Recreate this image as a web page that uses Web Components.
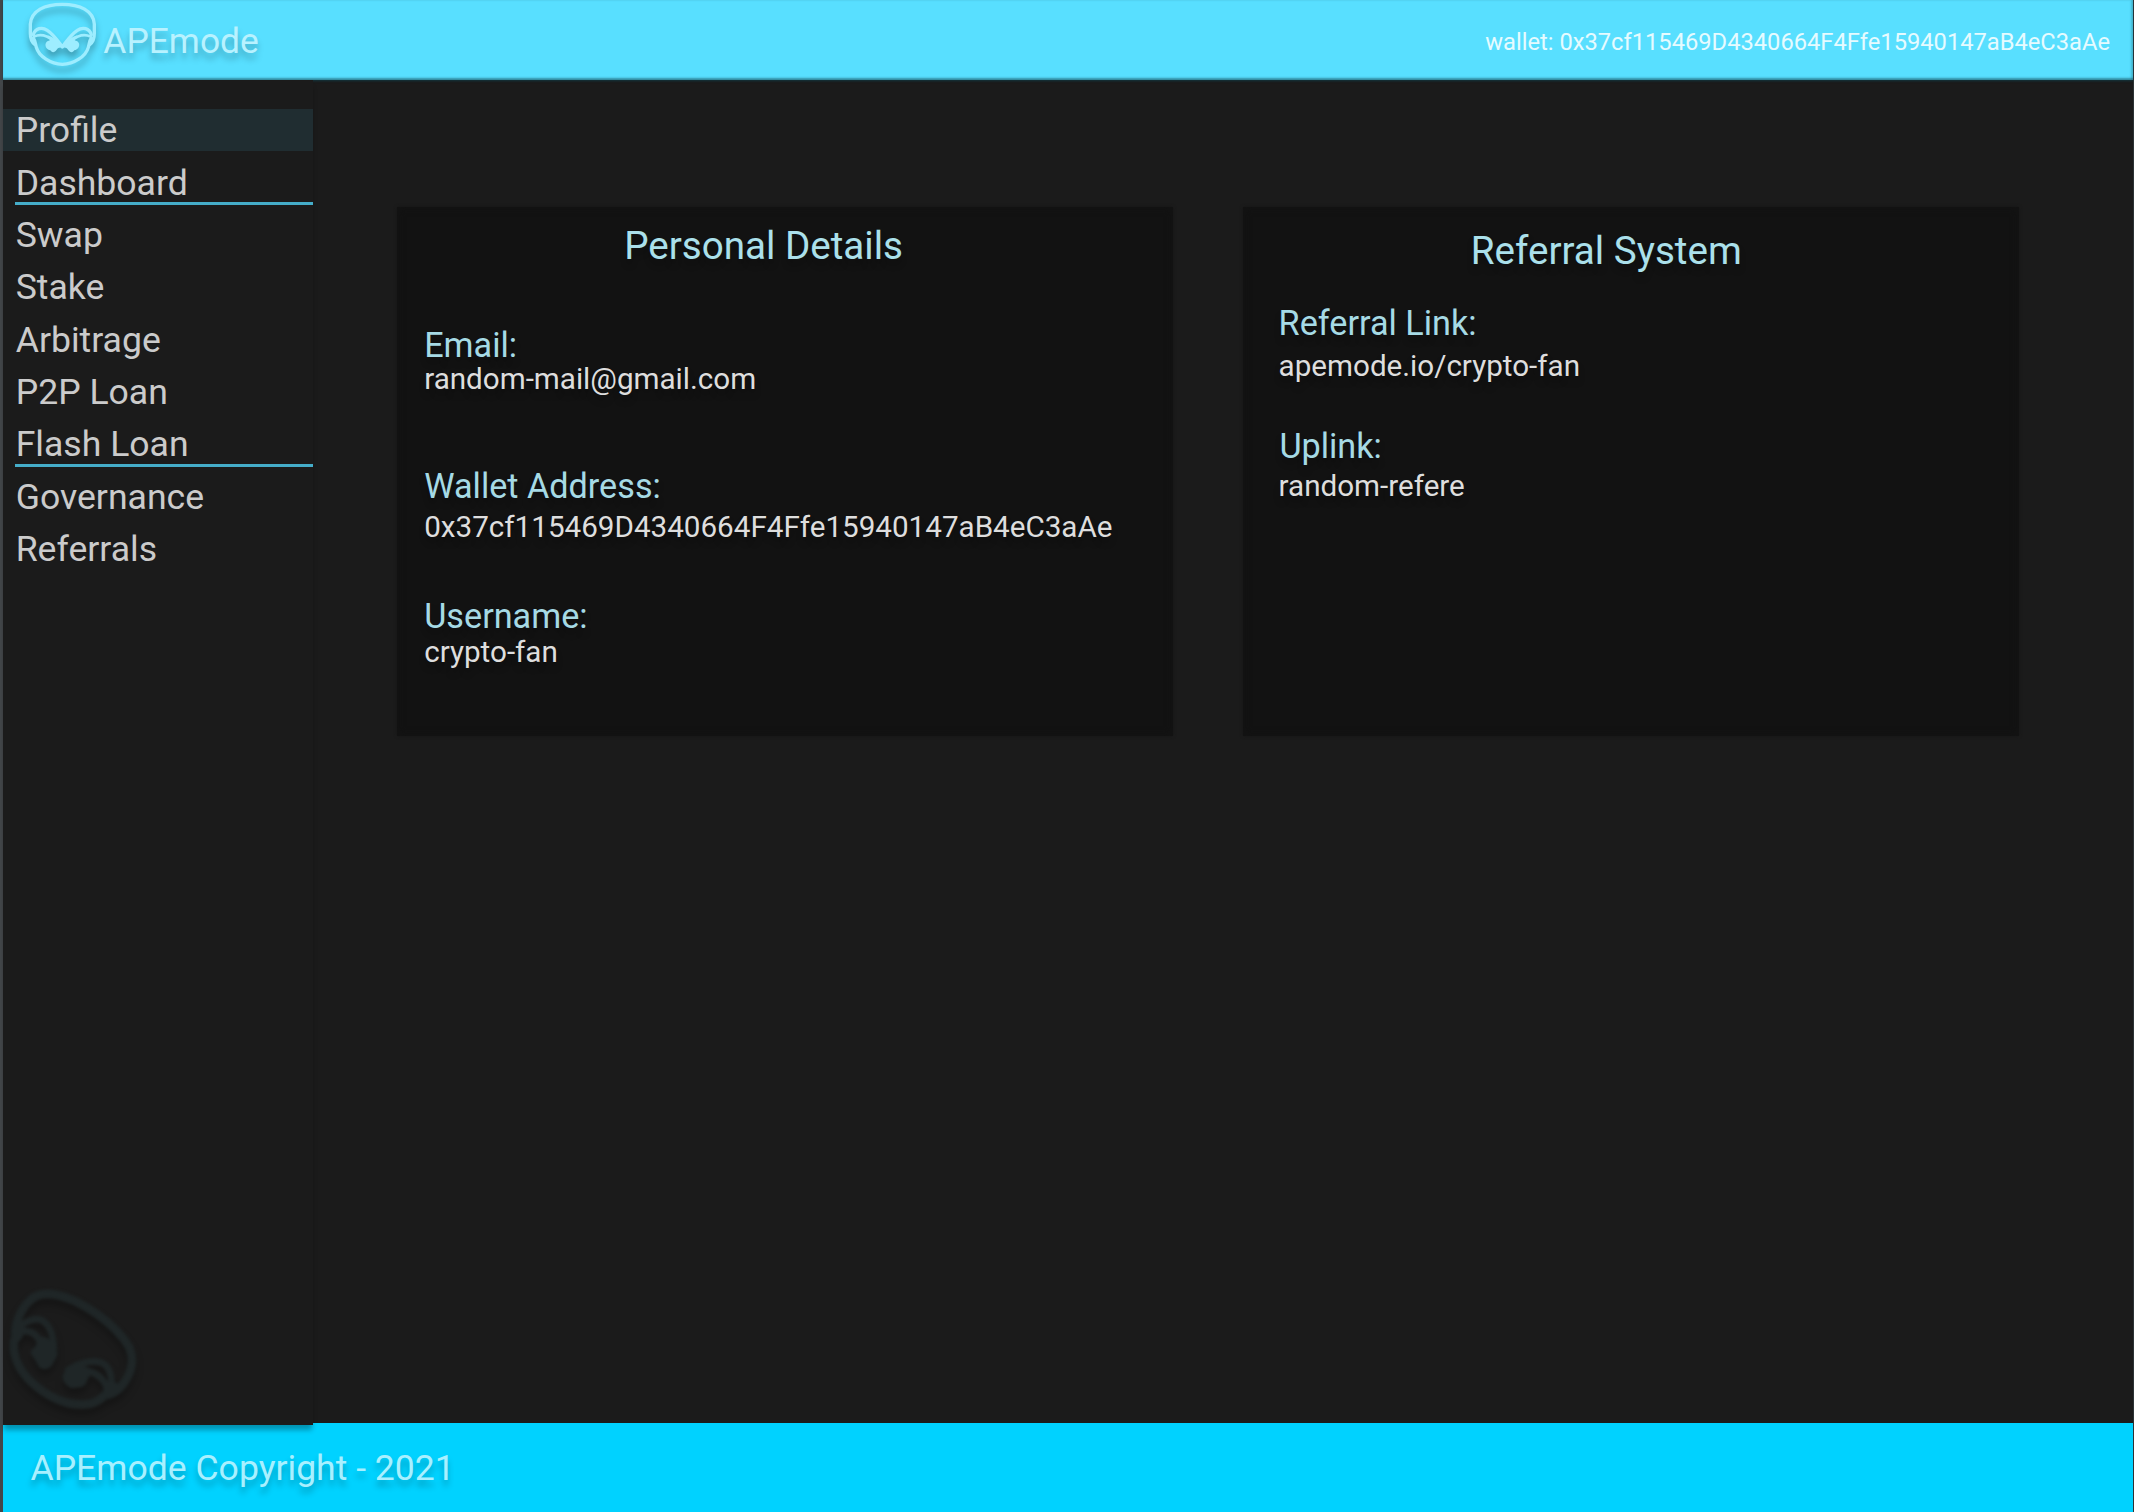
<!DOCTYPE html>
<html lang="en">
<head>
<meta charset="utf-8">
<title>APEmode</title>
<style>
html, body { margin: 0; height: 100%; }
body { background: #1b1b1b; font-family: Roboto, "Liberation Sans", sans-serif; overflow: hidden; }
</style>
</head>
<body>
<ape-app></ape-app>
<script>
const define = (name, html) => customElements.define(name, class extends HTMLElement {
  constructor() {
    super();
    const t = document.createElement('template');
    t.innerHTML = html;
    this.attachShadow({ mode: 'open' }).append(t.content.cloneNode(true));
  }
});

define('ape-logo', `
<style>
:host { display: block; flex: none; width: 100px; height: 80px; color: #9eedff; }
svg { display: block; overflow: visible; filter: drop-shadow(0 6px 3px rgba(0,0,0,.28)); }
</style>
<svg width="100" height="80" viewBox="0 0 300 240">
  <g fill="none" stroke="currentColor" stroke-width="10" stroke-linejoin="round" stroke-linecap="round">
    <path d="M74 133C64 126 61 114 61 100V72C64 32 104 13 157 13C210 13 250 32 253 72V100C253 114 250 126 240 133"/>
    <path d="M70 114C76 122 76 132 79 142C87 170 122 192 157 193C192 192 227 170 235 142C238 132 238 122 244 114"/>
    <path d="M70 104C76 84 96 80 112 91C132 104 144 124 157 141C170 124 182 104 202 91C218 80 238 84 244 104"/>
    <path stroke-width="8" d="M72 110C90 101 108 104 130 122M242 110C224 101 206 104 184 122"/>
  </g>
  <g fill="currentColor">
    <path d="M112 106C130 110 148 126 157 144C150 141 144 143 140 149C135 158 125 159 121 151C110 149 103 137 108 128C112 122 116 124 120 120Z"/>
    <path d="M202 106C184 110 166 126 157 144C164 141 170 143 174 149C179 158 189 159 193 151C204 149 211 137 206 128C202 122 198 124 194 120Z"/>
  </g>
</svg>`);

define('ape-watermark', `
<style>
:host { display: block; flex: none; width: 150px; height: 140px; color: #1f2627; }
svg { display: block; overflow: visible; filter: blur(1.5px) drop-shadow(0 6px 3px rgba(0,0,0,.25)); }
</style>
<svg width="150" height="140" viewBox="9 0 450 420">
  <g fill="none" stroke="currentColor" stroke-width="26" stroke-linejoin="round" stroke-linecap="round">
    <path d="M46 160C44 130 60 86 90 58C108 40 138 36 168 41C240 54 350 130 388 200C402 232 396 268 376 300C362 322 344 338 322 342"/>
    <path d="M50 160C38 180 38 210 52 245C70 290 130 345 200 365C240 374 270 374 295 358C310 348 325 335 340 315"/>
    <path stroke-width="20" d="M52 142C76 120 106 108 126 118C148 130 160 160 162 205M62 152C92 146 106 156 122 184"/>
    <path stroke-width="20" d="M204 268C236 246 276 236 302 244C326 252 336 280 334 310M262 270C290 276 306 290 322 318"/>
  </g>
  <g fill="currentColor">
    <path d="M112 166C140 164 164 180 172 214C174 226 166 234 160 246C152 266 126 272 114 254C110 240 98 232 92 216C92 204 104 202 108 192Z"/>
    <path d="M198 262C222 248 258 250 284 272C270 280 262 294 258 308C246 324 226 318 216 322C198 316 186 298 188 284Z"/>
    <path d="M40 120L80 140L66 172L40 200ZM308 306L330 296L360 312L332 352L312 350Z"/>
  </g>
</svg>`);

define('ape-header', `
<style>
:host { display: flex; align-items: flex-start; box-sizing: border-box; height: 79.5px; padding: 0 23px 0 7px;
  background: #58dfff; box-shadow: inset 0 -3px 2px -1px rgba(20,70,80,.5), inset -2px 0 2px rgba(20,70,80,.25), 0 1px 2px rgba(15,60,70,.8); position: relative; z-index: 1; }
.brand { margin: 20px 0 0 -6.7px; font-size: 35.4px; line-height: 42px; color: #b8f2ff; text-shadow: 0 6px 6px rgba(0,0,0,.25); }
.wallet { margin: 28px 0 0 auto; font-size: 23.7px; line-height: 28px; color: #e6fbff; }
</style>
<ape-logo></ape-logo>
<div class="brand"><slot></slot></div>
<div class="wallet"><slot name="wallet"></slot></div>`);

define('ape-nav-item', `
<style>
:host { display: block; margin-bottom: 10.35px; }
.t { display: block; padding-left: 12.7px; font-size: 35.6px; line-height: 42px; color: #cbcbcb; }
:host([active]) .t { background: #202d31; }
hr { display: none; height: 3px; margin: -1.2px 0 -1.8px 12px; border: 0; background: #45adc9; }
:host([rule]) hr { display: block; }
</style>
<span class="t"><slot></slot></span><hr>`);

define('ape-sidebar', `
<style>
:host { display: flex; flex-direction: column; box-sizing: border-box; width: 310px; flex: none; padding: 29.8px 0 4.5px;
  background: #1b1b1b; box-shadow: 0 6px 5px -1px rgba(0,0,0,.3); margin-bottom: -2px; }
ape-watermark { margin-top: auto; }
</style>
<slot></slot>
<ape-watermark></ape-watermark>`);

define('ape-panel', `
<style>
:host { display: block; box-sizing: border-box; flex: none; width: 776px; height: 529px; padding: var(--top) 0 0 var(--left);
  background: #121212; box-shadow: 0 0 3px #151515, inset 0 0 8px #141414; }
h2 { margin: 0 0 0 var(--title-x); font-size: 38.6px; line-height: 45px; font-weight: 400; color: #abe0eb; text-shadow: 0 6px 6px rgba(0,0,0,.25); }
</style>
<h2><slot name="title"></slot></h2>
<slot></slot>`);

define('ape-field', `
<style>
:host { display: block; text-shadow: 0 6px 6px rgba(0,0,0,.25); }
.l { font-size: 34.2px; line-height: 40px; color: #a6dae5; }
.v { margin-top: var(--gap); font-size: 29.65px; letter-spacing: -.016px; line-height: 35px; color: #dedede; }
</style>
<div class="l"><slot name="label"></slot></div>
<div class="v"><slot></slot></div>`);

define('ape-footer', `
<style>
:host { display: block; box-sizing: border-box; height: 89px; padding: 24px 0 0 27.5px; background: #00d2ff; }
span { display: block; font-size: 35.55px; line-height: 42px; color: #a8f0ff; text-shadow: 0 6px 6px rgba(0,0,0,.25); }
</style>
<span><slot></slot></span>`);

define('ape-app', `
<style>
:host { display: flex; flex-direction: column; box-sizing: border-box; height: 1512px; border-left: 3px solid #43474a; border-right: 1px solid #2c3335; background: #1b1b1b; }
.mid { display: flex; flex: 1; min-height: 0; position: relative; z-index: 1; }
main { display: flex; align-items: flex-start; gap: 70px; padding: 127.6px 0 0 83.7px; }
</style>
<ape-header>APEmode<span slot="wallet">wallet: 0x37cf115469D4340664F4Ffe15940147aB4eC3aAe</span></ape-header>
<div class="mid">
  <ape-sidebar>
    <ape-nav-item active>Profile</ape-nav-item>
    <ape-nav-item rule>Dashboard</ape-nav-item>
    <ape-nav-item>Swap</ape-nav-item>
    <ape-nav-item>Stake</ape-nav-item>
    <ape-nav-item>Arbitrage</ape-nav-item>
    <ape-nav-item>P2P Loan</ape-nav-item>
    <ape-nav-item rule>Flash Loan</ape-nav-item>
    <ape-nav-item>Governance</ape-nav-item>
    <ape-nav-item>Referrals</ape-nav-item>
  </ape-sidebar>
  <main>
    <ape-panel style="--top:16px;--left:27.5px;--title-x:200px">
      <span slot="title">Personal Details</span>
      <ape-field style="margin-top:57.3px;--gap:-4px"><span slot="label">Email:</span>random-mail@gmail.com</ape-field>
      <ape-field style="margin-top:69.3px;--gap:3.5px"><span slot="label">Wallet Address:</span>0x37cf115469D4340664F4Ffe15940147aB4eC3aAe</ape-field>
      <ape-field style="margin-top:52.2px;--gap:-2.2px"><span slot="label">Username:</span>crypto-fan</ape-field>
    </ape-panel>
    <ape-panel style="--top:21px;--left:35.9px;--title-x:192.2px">
      <span slot="title">Referral System</span>
      <ape-field style="margin-top:30.1px;--gap:4.9px"><span slot="label">Referral Link:</span>apemode.io/crypto-fan</ape-field>
      <ape-field style="margin-top:43px;--gap:2px"><span slot="label" style="padding-left:.8px">Uplink:</span>random-refere</ape-field>
    </ape-panel>
  </main>
</div>
<ape-footer>APEmode Copyright - 2021</ape-footer>`);
</script>
</body>
</html>
